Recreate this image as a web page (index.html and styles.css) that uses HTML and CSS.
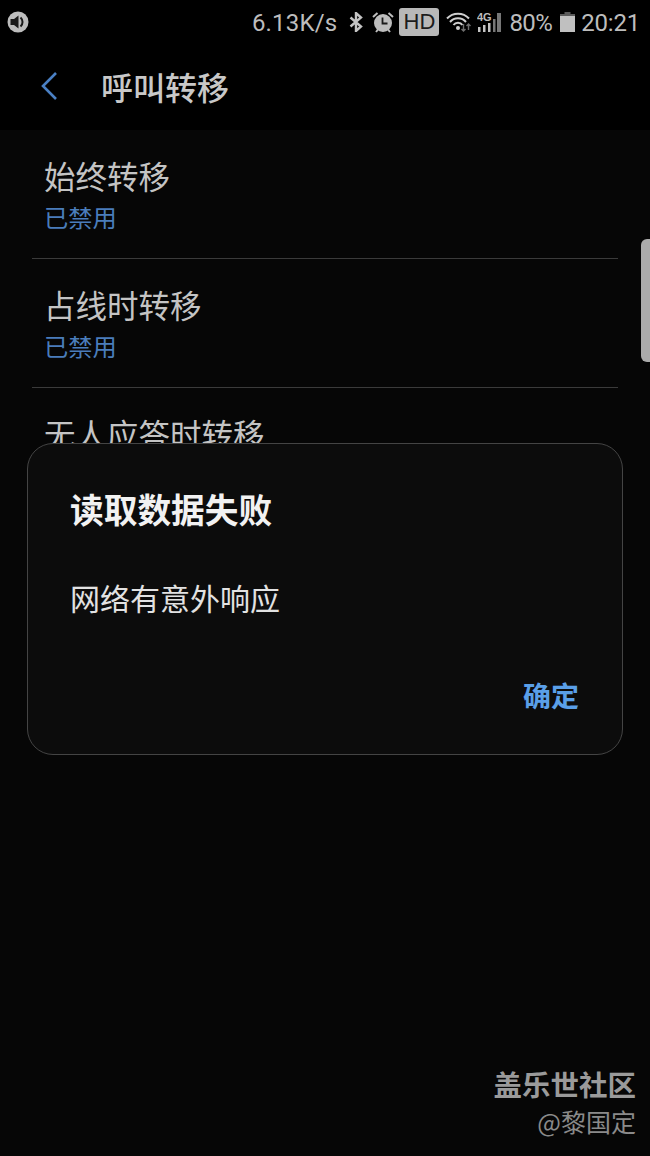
FILE: index.html
```html
<!DOCTYPE html>
<html lang="zh-CN">
<head>
  <meta charset="UTF-8">
  <meta name="viewport" content="width=device-width, initial-scale=1.0">
  <title>呼叫转移</title>
  <link rel="stylesheet" href="styles.css">
</head>
<body>
  <div class="phone">
    <div class="status-bar">
      <svg class="sound-icon" width="22" height="22" viewBox="0 0 22 22">
        <circle cx="11" cy="11" r="10.5" fill="#bdbdbd"/>
        <path d="M3.500 8h3.500L11.500 4.500v13L7 14H3.500z" fill="#1a1a1a"/>
        <path d="M13.500 6.500a6 6 0 0 1 0 9" fill="none" stroke="#1a1a1a" stroke-width="2"/>
      </svg>
      <div class="status-right">
        <span class="status-text speed">6.13K/s</span>
        <svg class="bt-icon" width="14" height="20" viewBox="0 0 14 20">
          <path d="M1.500 5.500l10.500 9-5 4.500V1l5 4.500-10.500 9" fill="none" stroke="#c4c4c4" stroke-width="2.400"/>
        </svg>
        <svg class="alarm-icon" width="22" height="22" viewBox="0 0 22 22">
          <circle cx="11" cy="12" r="9" fill="#bdbdbd"/>
          <path d="M10.500 6.500v6h5" fill="none" stroke="#1a1a1a" stroke-width="1.800"/>
          <path d="M1 6l4.500-4M21 6l-4.500-4M4 21l2-2.500M18 21l-2-2.500" stroke="#bdbdbd" stroke-width="2"/>
        </svg>
        <span class="hd-badge">HD</span>
        <svg class="wifi-icon" width="25" height="20" viewBox="0 0 25 20">
          <path d="M1 6.500a15 15 0 0 1 22 0M4 10a10.500 10.500 0 0 1 16 0M7.500 13a5.500 5.500 0 0 1 9 0" fill="none" stroke="#cfcfcf" stroke-width="2"/>
          <circle cx="12" cy="16" r="2" fill="#cfcfcf"/>
          <path d="M17.500 12v7M15.500 17l2 2 2-2" fill="none" stroke="#6e6e6e" stroke-width="1.400"/>
          <path d="M22.500 18v-6M20.500 14l2-2 2 2" fill="none" stroke="#6e6e6e" stroke-width="1.400"/>
        </svg>
        <svg class="signal-icon" width="24" height="20" viewBox="0 0 24 20">
          <text x="0" y="9" class="signal-label">4G</text>
          <path d="M1 20v-5h2.500v5zM6 20v-7h2.500v7zM11 20v-9h2.500v9z" fill="#c4c4c4"/>
          <path d="M16 20V7h2.500v13zM20 20V1h4v19z" fill="#777"/>
        </svg>
        <span class="status-text battery-text">80%</span>
        <svg class="battery-icon" width="15" height="20" viewBox="0 0 15 20">
          <path d="M4.500 0h6v2h4.500v18H0V2h4.500z" fill="#5a5a5a"/>
          <path d="M0 4h15v16H0z" fill="#c0c0c0"/>
        </svg>
        <span class="status-text clock">20:21</span>
      </div>
    </div>

    <div class="app-bar">
      <svg class="back-icon" width="18" height="30" viewBox="0 0 18 30">
        <path d="M16 2L3 15l13 13" fill="none" stroke="#4a80c4" stroke-width="2.600"/>
      </svg>
      <h1 class="app-title">呼叫转移</h1>
    </div>

    <ul class="list">
      <li class="row">
        <div class="row-title">始终转移</div>
        <div class="row-sub">已禁用</div>
      </li>
      <li class="row">
        <div class="row-title">占线时转移</div>
        <div class="row-sub">已禁用</div>
      </li>
      <li class="row">
        <div class="row-title">无人应答时转移</div>
        <div class="row-sub">已禁用</div>
      </li>
    </ul>

    <div class="scroll-thumb"></div>

    <div class="dialog">
      <h2 class="dialog-title">读取数据失败</h2>
      <p class="dialog-text">网络有意外响应</p>
      <div class="dialog-actions">
        <span class="dialog-btn">确定</span>
      </div>
    </div>

    <div class="watermark">
      <div class="wm-name">盖乐世社区</div>
      <div class="wm-author">@黎国定</div>
    </div>
  </div>
</body>
</html>
```

FILE: styles.css
```css
* {
  box-sizing: border-box;
}
body {
  margin: 0;
  background-color: #050505;
  font-family: "Noto Sans CJK SC", "Noto Sans", sans-serif;
}
.phone {
  position: relative;
  width: 650px;
  height: 1156px;
  overflow: hidden;
  background-color: #060606;
}

/* status bar */
.status-bar {
  display: flex;
  align-items: center;
  justify-content: space-between;
  height: 44px;
  padding: 0 10px 0 7px;
  background-color: #000;
}
.status-right {
  display: flex;
  align-items: center;
}
.status-text {
  position: relative;
  top: 1px;
  font-family: Roboto, "Liberation Sans", sans-serif;
  font-size: 24px;
  line-height: 30px;
  color: #bdbdbd;
}
.speed {
  margin-right: 12px;
  letter-spacing: 0.2px;
}
.bt-icon {
  margin-right: 9px;
}
.alarm-icon {
  margin-right: 5px;
}
.hd-badge {
  width: 40px;
  height: 28px;
  margin-right: 7px;
  border-radius: 3px;
  background-color: #b8b8b8;
  color: #1c1c1c;
  font-family: "Liberation Sans", sans-serif;
  font-size: 22px;
  line-height: 28px;
  text-align: center;
}
.wifi-icon {
  margin-right: 6px;
}
.signal-icon {
  margin-right: 8px;
}
.signal-label {
  font-family: "Liberation Sans", sans-serif;
  font-size: 11px;
  font-weight: bold;
  fill: #bdbdbd;
}
.battery-text {
  margin-right: 8px;
  letter-spacing: -0.6px;
}
.battery-icon {
  margin-right: 6px;
}
.clock {
  letter-spacing: -0.2px;
}

/* app bar */
.app-bar {
  display: flex;
  align-items: center;
  height: 86px;
  padding-left: 40px;
  padding-bottom: 2px;
  background-color: #000;
}
.back-icon {
  margin-right: 43px;
}
.app-title {
  margin: 0;
  font-size: 32px;
  font-weight: 500;
  line-height: 44px;
  color: #c8c8c8;
}

/* list */
.list {
  margin: 0 32px;
  padding: 0;
  list-style: none;
}
.row {
  height: 129px;
  padding: 25px 0 0 12px;
  border-bottom: 1px solid #3a3a3a;
}
.row-title {
  font-size: 31.500px;
  line-height: 40px;
  color: #c4c4c4;
}
.row-sub {
  margin-top: 6px;
  font-size: 24.300px;
  line-height: 32px;
  color: #4a7dbb;
}
.scroll-thumb {
  position: absolute;
  top: 239px;
  right: 0;
  width: 9px;
  height: 123px;
  border-radius: 6px 0 0 6px;
  background-color: #ababab;
}

/* dialog */
.dialog {
  position: absolute;
  top: 443px;
  left: 27px;
  width: 596px;
  height: 312px;
  padding: 42px 43px 0 42px;
  border: 1px solid #444;
  border-radius: 26px;
  background-color: #0c0c0c;
}
.dialog-title {
  margin: 0;
  font-size: 33.700px;
  font-weight: 700;
  line-height: 46px;
  color: #f2f2f2;
}
.dialog-text {
  margin: 44px 0 0;
  font-size: 30px;
  line-height: 42px;
  color: #e2e2e2;
}
.dialog-actions {
  display: flex;
  justify-content: flex-end;
  margin-top: 58px;
}
.dialog-btn {
  font-size: 28px;
  font-weight: 700;
  line-height: 38px;
  color: #5a9fe8;
}

/* watermark */
.watermark {
  position: absolute;
  right: 14px;
  bottom: 17px;
  text-align: right;
}
.wm-name {
  font-size: 28.500px;
  font-weight: 700;
  line-height: 38px;
  color: #9a9a9a;
}
.wm-author {
  font-size: 25px;
  line-height: 36px;
  color: #8a8a8a;
}
```
